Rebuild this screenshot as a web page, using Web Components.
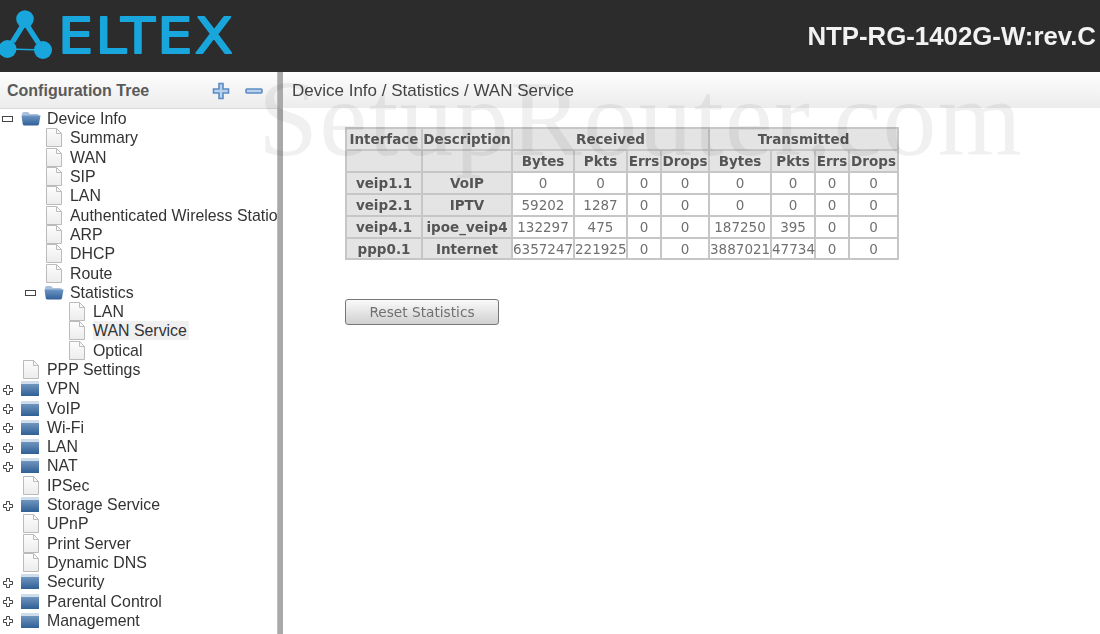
<!DOCTYPE html>
<html>
<head>
<meta charset="utf-8">
<title>Device Info</title>
<style>
  html, body { margin: 0; height: 100%; overflow: hidden; background: #fff; }
  body { font-family: "Liberation Sans", Arial, sans-serif; color: #333; }
</style>
</head>
<body>
<router-page>
  <top-bar slot="top" model="NTP-RG-1402G-W:rev.C"></top-bar>
  <config-tree slot="side">
    <tree-node level="0" kind="open" toggle="minus">Device Info</tree-node>
    <tree-node level="1" kind="doc">Summary</tree-node>
    <tree-node level="1" kind="doc">WAN</tree-node>
    <tree-node level="1" kind="doc">SIP</tree-node>
    <tree-node level="1" kind="doc">LAN</tree-node>
    <tree-node level="1" kind="doc">Authenticated Wireless Station</tree-node>
    <tree-node level="1" kind="doc">ARP</tree-node>
    <tree-node level="1" kind="doc">DHCP</tree-node>
    <tree-node level="1" kind="doc">Route</tree-node>
    <tree-node level="1" kind="open" toggle="minus">Statistics</tree-node>
    <tree-node level="2" kind="doc">LAN</tree-node>
    <tree-node level="2" kind="doc" selected>WAN Service</tree-node>
    <tree-node level="2" kind="doc">Optical</tree-node>
    <tree-node level="0" kind="doc">PPP Settings</tree-node>
    <tree-node level="0" kind="closed" toggle="plus">VPN</tree-node>
    <tree-node level="0" kind="closed" toggle="plus">VoIP</tree-node>
    <tree-node level="0" kind="closed" toggle="plus">Wi-Fi</tree-node>
    <tree-node level="0" kind="closed" toggle="plus">LAN</tree-node>
    <tree-node level="0" kind="closed" toggle="plus">NAT</tree-node>
    <tree-node level="0" kind="doc">IPSec</tree-node>
    <tree-node level="0" kind="closed" toggle="plus">Storage Service</tree-node>
    <tree-node level="0" kind="doc">UPnP</tree-node>
    <tree-node level="0" kind="doc">Print Server</tree-node>
    <tree-node level="0" kind="doc">Dynamic DNS</tree-node>
    <tree-node level="0" kind="closed" toggle="plus">Security</tree-node>
    <tree-node level="0" kind="closed" toggle="plus">Parental Control</tree-node>
    <tree-node level="0" kind="closed" toggle="plus">Management</tree-node>
  </config-tree>
  <content-pane slot="main" crumb="Device Info / Statistics / WAN Service">
    <wan-stats></wan-stats>
    <reset-button>Reset Statistics</reset-button>
  </content-pane>
</router-page>

<script>
class RouterPage extends HTMLElement {
  constructor() {
    super();
    this.attachShadow({mode: 'open'}).innerHTML = `
      <style>
        :host { display: flex; flex-direction: column; height: 634px; width: 1100px; position: relative; overflow: hidden; filter: blur(.4px); }
        .body { display: flex; flex: 1; min-height: 0; }
        .split { width: 6px; background: #a9a9a9; border-left: 1px solid #bdbdbd; box-sizing: border-box; }
        .mark { position: absolute; left: 258px; top: 57px; font: 108px/1.15 "Liberation Serif", serif; letter-spacing: 1.2px; color: rgba(0,0,0,.06); white-space: nowrap; pointer-events: none; }
      </style>
      <slot name="top"></slot>
      <div class="body">
        <slot name="side"></slot>
        <div class="split"></div>
        <slot name="main"></slot>
      </div>
      <div class="mark">SetupRouter.com</div>`;
  }
}

class TopBar extends HTMLElement {
  constructor() {
    super();
    this.attachShadow({mode: 'open'}).innerHTML = `
      <style>
        :host { display: flex; align-items: center; justify-content: space-between; height: 72px; background: #2c2c2c; flex: none; }
        svg { display: block; }
        .logo-text { font: 400 50px "DejaVu Sans", sans-serif; letter-spacing: 2px; fill: #18a6dc; stroke: #18a6dc; stroke-width: 1.8px; stroke-linejoin: round; }
        .model { font: 700 25.8px "Liberation Sans", sans-serif; color: #f2f2f2; padding: 0 4px 0 0; }
      </style>
      <svg width="240" height="72" viewBox="0 0 240 72">
        <path d="M25 19L7.5 49 43 50Z" fill="none" stroke="#18a6dc" stroke-width="1.6"/>
        <path d="M20 25L25 27 15 43 10 41ZM30 25L25 27 36 44 41 42Z" fill="#18a6dc"/>
        <circle cx="25" cy="19" r="8.8" fill="#18a6dc"/>
        <circle cx="7.5" cy="49" r="9" fill="#18a6dc"/>
        <circle cx="43" cy="50" r="9" fill="#18a6dc"/>
        <text class="logo-text" x="58" y="53" textLength="177" lengthAdjust="spacingAndGlyphs">ELTEX</text>
      </svg>
      <div class="model"></div>`;
  }
  connectedCallback() {
    this.shadowRoot.querySelector('.model').textContent = this.getAttribute('model');
  }
}

class ConfigTree extends HTMLElement {
  constructor() {
    super();
    this.attachShadow({mode: 'open'}).innerHTML = `
      <style>
        :host { display: flex; flex-direction: column; width: 277px; flex: none; overflow: hidden; background: #fff; }
        .title { height: 37px; flex: none; box-sizing: border-box; display: flex; align-items: center; padding: 2px 14px 0 7px; gap: 15px;
          background: linear-gradient(#fdfdfd, #ececec); border-bottom: 1px solid #d9d9d9; }
        .title b { flex: 1; font: 700 16px "Liberation Sans", sans-serif; color: #5a5a5a; }
        svg { display: block; }
      </style>
      <div class="title">
        <b>Configuration Tree</b>
        <svg width="18" height="18" viewBox="0 0 18 18"><path d="M7 1.5h4v5.5h5.5v4H11v5.5H7V11H1.5V7H7Z" fill="#b9d1ea" stroke="#5b8cc2" stroke-width="1.6"/></svg>
        <svg width="18" height="18" viewBox="0 0 18 18"><rect x="1" y="7" width="16" height="4" rx="1" fill="#b9d1ea" stroke="#5b8cc2" stroke-width="1.6"/></svg>
      </div>
      <div class="list"><slot></slot></div>`;
  }
}

const ICONS = {
  doc: `<svg width="18" height="19" viewBox="0 0 18 19"><defs><linearGradient id="d" x1="0" y1="0" x2="0" y2="1"><stop offset="0" stop-color="#fdfdfd"/><stop offset="1" stop-color="#ececec"/></linearGradient></defs><path d="M1.5.5H11.5L16.5 5.5V18.5H1.5Z" fill="url(#d)" stroke="#bbb"/><path d="M11.5 .5V5.5H16.5" fill="none" stroke="#bbb"/></svg>`,
  open: `<svg width="20" height="15" viewBox="0 0 20 15"><defs><linearGradient id="o" x1="0" y1="0" x2="0" y2="1"><stop offset="0" stop-color="#6e96c4"/><stop offset="1" stop-color="#2f6098"/></linearGradient></defs><path d="M1 3Q1 1 3 1H7L9 3H16Q18 3 18 5V6H1Z" fill="#a9c0da"/><path d="M.5 4.5H19.5L18 13Q17.7 14.5 16 14.5H3.5Q2 14.5 1.7 13Z" fill="url(#o)"/></svg>`,
  closed: `<svg width="18" height="15" viewBox="0 0 18 15"><defs><linearGradient id="c" x1="0" y1="0" x2="0" y2="1"><stop offset="0" stop-color="#6f95bf"/><stop offset="1" stop-color="#2f5f94"/></linearGradient></defs><rect x="0" y="0" width="18" height="3" fill="#cfdcea"/><rect x="0" y="3" width="18" height="12" fill="url(#c)"/></svg>`
};
const TOGGLES = {
  minus: `<svg width="11" height="7" viewBox="0 0 11 7"><rect x=".5" y=".5" width="10" height="5" fill="#fff" stroke="#444"/></svg>`,
  plus: `<svg width="10" height="10" viewBox="0 0 10 10"><path d="M3.5 .5h3V3.5h3v3h-3v3h-3v-3h-3v-3h3Z" fill="#fff" stroke="#444"/></svg>`
};

class TreeNode extends HTMLElement {
  constructor() {
    super();
    this.attachShadow({mode: 'open'});
  }
  connectedCallback() {
    const level = +this.getAttribute('level');
    const toggle = this.getAttribute('toggle');
    const kind = this.getAttribute('kind');
    const left = level * 23;
    this.shadowRoot.innerHTML = `
      <style>
        :host { display: block; height: 19.31px; font: 15.9px/19px "Liberation Sans", sans-serif; color: #333; white-space: nowrap; }
        .row { display: flex; align-items: center; height: 100%; padding-left: ${left}px; }
        .tog { width: 15px; flex: none; display: flex; justify-content: center; padding-top: 2px; }
        .ico { width: 32px; flex: none; display: flex; justify-content: flex-start; padding-left: 6px; box-sizing: border-box; }
        .ico.doc { width: 47px; justify-content: flex-end; padding-left: 0; padding-right: 7px; }
        .lab { padding: 0 2px 0 0; }
        :host([selected]) .lab { background: #f0f0f0; }
        svg { display: block; }
      </style>
      <div class="row">
        ${kind === 'doc' ? `<span class="ico doc">${ICONS.doc}</span>`
          : `<span class="tog">${TOGGLES[toggle]}</span><span class="ico">${ICONS[kind]}</span>`}
        <span class="lab"><slot></slot></span>
      </div>`;
  }
}

class ContentPane extends HTMLElement {
  constructor() {
    super();
    this.attachShadow({mode: 'open'}).innerHTML = `
      <style>
        :host { display: block; flex: 1; min-width: 0; }
        .crumb { height: 36px; box-sizing: border-box; padding: 2px 9px 0; display: flex; align-items: center; font: 17px "Liberation Sans", sans-serif; color: #444;
          background: linear-gradient(#fdfdfd, #ececec); }
        .inner { padding: 19px 0 0 62px; display: flex; flex-direction: column; align-items: flex-start; gap: 39px; }
      </style>
      <div class="crumb"></div>
      <div class="inner"><slot></slot></div>`;
  }
  connectedCallback() {
    this.shadowRoot.querySelector('.crumb').textContent = this.getAttribute('crumb');
  }
}

const STATS = [
  ['veip1.1', 'VoIP', '0', '0', '0', '0', '0', '0', '0', '0'],
  ['veip2.1', 'IPTV', '59202', '1287', '0', '0', '0', '0', '0', '0'],
  ['veip4.1', 'ipoe_veip4', '132297', '475', '0', '0', '187250', '395', '0', '0'],
  ['ppp0.1', 'Internet', '6357247', '221925', '0', '0', '3887021', '47734', '0', '0']
];
const COLS = [76, 90, 62, 53, 34, 48, 62, 44, 34, 49];

class WanStats extends HTMLElement {
  constructor() {
    super();
    const sub = ['Bytes', 'Pkts', 'Errs', 'Drops', 'Bytes', 'Pkts', 'Errs', 'Drops'];
    this.attachShadow({mode: 'open'}).innerHTML = `
      <style>
        :host { display: block; }
        table { border-collapse: collapse; table-layout: fixed; width: 552px; font: 13.5px "DejaVu Sans", Verdana, sans-serif; border: 2px solid #bcbcbc; }
        td, th { border: 2px solid #c6c6c6; height: 22px; padding: 0; text-align: center; white-space: nowrap; box-sizing: border-box; }
        tr:last-child > * { height: 21px; }
        th { background: #e4e4e4; color: #555; font-weight: 700; }
        td { background: #fff; color: #707070; }
      </style>
      <table>
        <colgroup>${COLS.map(w => `<col style="width:${w}px">`).join('')}</colgroup>
        <tr><th>Interface</th><th>Description</th><th colspan="4">Received</th><th colspan="4">Transmitted</th></tr>
        <tr><th></th><th></th>${sub.map(s => `<th>${s}</th>`).join('')}</tr>
        ${STATS.map(r => `<tr>${r.map((c, i) => i < 2 ? `<th>${c}</th>` : `<td>${c}</td>`).join('')}</tr>`).join('')}
      </table>`;
  }
}

class ResetButton extends HTMLElement {
  constructor() {
    super();
    this.attachShadow({mode: 'open'}).innerHTML = `
      <style>
        :host { display: block; }
        button { display: block; width: 154px; height: 26px; padding: 0; border: 1px solid #777; border-radius: 3px; font: 13.7px "DejaVu Sans", sans-serif; color: #707070;
          background: linear-gradient(#fafafa, #d0d0d0); }
      </style>
      <button><slot></slot></button>`;
  }
}

customElements.define('tree-node', TreeNode);
customElements.define('config-tree', ConfigTree);
customElements.define('top-bar', TopBar);
customElements.define('wan-stats', WanStats);
customElements.define('reset-button', ResetButton);
customElements.define('content-pane', ContentPane);
customElements.define('router-page', RouterPage);
</script>
</body>
</html>
